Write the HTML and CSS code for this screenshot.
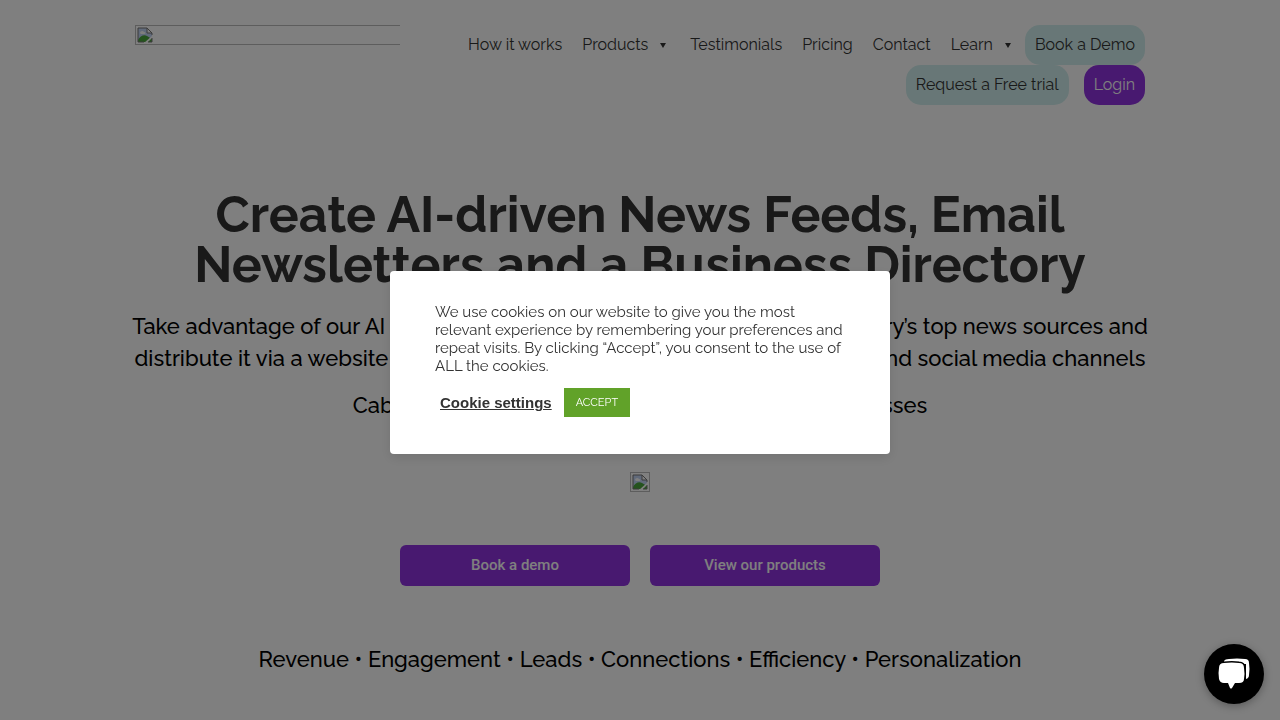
FILE: index.html
```
<!DOCTYPE html>
<html lang="en">
<head>
    <meta charset="UTF-8">
    <meta name="viewport" content="width=device-width, initial-scale=1.0">
    <title>AI-driven News Feeds</title>
    <link rel="stylesheet" href="styles.css">
</head>
<body>

<svg class="sprite" aria-hidden="true">
    <symbol id="missing" viewBox="0 0 16 16">
        <path d="M1 1h9l5 5v9H1z" fill="#c3d4f5"/>
        <path d="M1 15v-2c2-4 6-6 9-4l5 3v3z" fill="#4aa63c"/>
        <path d="M3 6c0-2 3-3 4-1 2 0 2 2 0 2H4z" fill="#fff"/>
        <path d="M16 8v2l-6 6H7z" fill="#fff"/>
        <path d="M10 1v5h5z" fill="#fff"/>
        <path d="M1 15V1h9l5 5v2M10 1v5h5M1 15h6M15 11v4h-4" fill="none" stroke="#777" stroke-width="1"/>
    </symbol>
</svg>

<header class="header">
    <a href="#" class="logo" aria-label="Home"><span class="logo-image"><svg class="missing"><use href="#missing"/></svg></span></a>
    <nav class="menu">
        <a href="#">How it works</a>
        <a href="#" class="has-sub">Products</a>
        <a href="#">Testimonials</a>
        <a href="#">Pricing</a>
        <a href="#">Contact</a>
        <a href="#" class="has-sub">Learn</a>
        <a href="#" class="pill">Book a Demo</a>
        <a href="#" class="pill">Request a Free trial</a>
        <a href="#" class="pill login">Login</a>
    </nav>
</header>

<main class="hero">
    <h1>Create AI-driven News Feeds, Email<br>Newsletters and a Business Directory</h1>
    <p>Take advantage of our AI technology to discover content from your industry’s top news sources and<br>distribute it via a website directory plugin, automated email newsletters and social media channels</p>
    <p>Cabined is built for publishers, networks and businesses</p>
    <div class="picture"><svg class="missing"><use href="#missing"/></svg></div>
    <div class="actions">
        <a href="#" class="action">Book a demo</a>
        <a href="#" class="action">View our products</a>
    </div>
    <p class="tagline">Revenue • Engagement • Leads • Connections • Efficiency • Personalization</p>
</main>

<div class="overlay">
    <div class="cookie-box" role="dialog" aria-label="Cookies">
        <p>We use cookies on our website to give you the most<br>relevant experience by remembering your preferences and<br>repeat visits. By clicking “Accept”, you consent to the use of<br>ALL the cookies.</p>
        <div class="cookie-buttons">
            <button type="button" class="settings">Cookie settings</button>
            <button type="button" class="accept">ACCEPT</button>
        </div>
    </div>
</div>

<button type="button" class="chat" aria-label="Open chat">
    <svg viewBox="0 0 60 60">
        <path d="M20 17q1-2 5-2 8-1 16 0 4 0 4 4 1 6 0 12 0 3-3 4V20H20z" fill="#fff"/>
        <path d="M20 19q8-1 15 0 5 0 5 5 1 6 0 11 0 4-5 4h-4l-3 5q-1 1-2 0l-2-5h-4q-4 0-5-4-1-6 0-11 0-5 5-5z" fill="#fff" stroke="#000" stroke-width="3" paint-order="stroke"/>
    </svg>
</button>

</body>
</html>
```
FILE: styles.css
```
* {
    box-sizing: border-box;
}

body {
    margin: 0;
    background-color: #fff;
    color: #000;
    font-family: Raleway, Lato, sans-serif;
}

.sprite {
    position: absolute;
    width: 0;
    height: 0;
}

.missing {
    display: block;
    width: 16px;
    height: 16px;
}

.header {
    display: flex;
    max-width: 1010px;
    margin: 0 auto;
    padding-top: 25px;
}

.logo {
    flex: 0 0 265px;
    overflow: hidden;
}

.logo-image {
    display: block;
    width: 300px;
    padding: 1px;
    border: 1px solid #bbb;
}

.menu {
    flex: 1;
    display: flex;
    flex-wrap: wrap;
    justify-content: flex-end;
}

.menu a {
    padding: 0 10px;
    color: #333;
    font-size: 16px;
    line-height: 40px;
    text-decoration: none;
}

.menu .has-sub::after {
    content: "";
    display: inline-block;
    margin: 0 4px 2px 12px;
    border: 3px solid transparent;
    border-top: 5px solid #333;
    border-bottom: 0;
}

.menu .pill {
    background-color: #d1efee;
    border-radius: 15px;
}

.menu .login {
    margin-left: 15px;
    background-color: #9032e0;
    color: #fff;
}

.hero {
    padding: 85px 20px 40px;
    text-align: center;
}

h1 {
    margin: 0 0 20px;
    color: #333;
    font-size: 50px;
    line-height: 50px;
}

.hero p {
    margin: 0 0 15px;
    font-size: 22px;
    font-weight: 500;
    line-height: 32px;
}

.picture {
    width: 20px;
    margin: 51px auto 53px;
    padding: 1px;
    border: 1px solid #bbb;
}

.actions {
    display: flex;
    justify-content: center;
    gap: 20px;
    margin-bottom: 57px;
}

.action {
    width: 230px;
    border-radius: 6px;
    background-color: #9032e0;
    color: #fff;
    font: 500 15px/41px Roboto, sans-serif;
    text-decoration: none;
}

.overlay {
    position: fixed;
    inset: 0;
    display: flex;
    align-items: center;
    justify-content: center;
    padding-top: 5px;
    background-color: rgba(0, 0, 0, 0.5);
}

.cookie-box {
    width: 500px;
    padding: 32px 40px 37px 45px;
    border-radius: 4px;
    background-color: #fff;
    box-shadow: 0 4px 12px rgba(0, 0, 0, 0.1);
}

.cookie-box p {
    margin: 0 0 13px;
    color: #333;
    font-size: 15px;
    line-height: 18px;
}

.cookie-buttons {
    display: flex;
    align-items: center;
    gap: 12px;
}

.settings {
    margin-left: 5px;
    padding: 0;
    border: 0;
    background: none;
    color: #333;
    font: bold 15px "Liberation Sans", Arial, sans-serif;
    text-decoration: underline;
    cursor: pointer;
}

.accept {
    padding: 0 12px;
    border: 0;
    background-color: #61a229;
    color: #fff;
    font-family: inherit;
    font-size: 11px;
    line-height: 29px;
    cursor: pointer;
}

.chat {
    position: fixed;
    right: 16px;
    bottom: 16px;
    width: 60px;
    height: 60px;
    padding: 0;
    border: 0;
    border-radius: 50%;
    background-color: #000;
    box-shadow: 0 2px 8px rgba(0, 0, 0, 0.3);
    cursor: pointer;
}

.chat svg {
    display: block;
}
```
